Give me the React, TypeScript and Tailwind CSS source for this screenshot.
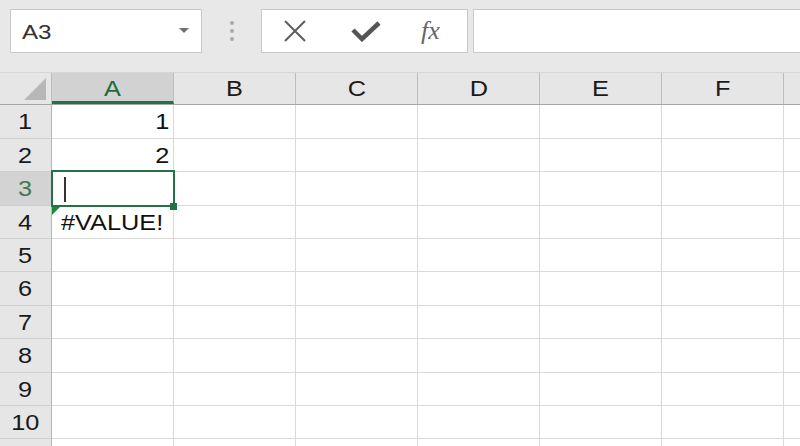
import React from "react";

const cols = ["A", "B", "C", "D", "E", "F", ""];
const rowHeights = [34, 33, 34, 33, 33, 34, 33, 34, 33, 33, 20];

export default function App() {
  return (
    <div
      className="w-[800px] h-[446px] overflow-hidden bg-white"
      style={{ fontFamily: '"Liberation Sans", Arial, sans-serif' }}
    >
      {/* toolbar */}
      <div className="h-[72px] bg-[#e8e8e8] flex items-start pt-[9px] pl-[10px]">
        <div className="w-[192px] h-[44px] bg-white border border-[#c9c9c9] flex items-center justify-between pl-[11px] pr-[12px]">
          <span className="text-[21px] text-[#333] inline-block origin-left scale-x-115 pt-[2px]">A3</span>
          <svg width="10" height="6" viewBox="0 0 10 6">
            <path d="M0 0 L10 0 L5 5 Z" fill="#707070" />
          </svg>
        </div>
        <div className="w-[59px] h-[44px] flex flex-col items-center justify-center gap-[4px]">
          <div className="w-[4px] h-[4px] rounded-full bg-[#a9a9a9]" />
          <div className="w-[4px] h-[4px] rounded-full bg-[#a9a9a9]" />
          <div className="w-[4px] h-[4px] rounded-full bg-[#a9a9a9]" />
        </div>
        <div className="w-[207px] h-[44px] bg-white border border-[#c9c9c9] flex items-center pl-[21px]">
          <svg width="24" height="24" viewBox="0 0 24 24">
            <path d="M2 2 L22 22 M22 2 L2 22" stroke="#5e5e5e" strokeWidth="2" fill="none" />
          </svg>
          <svg width="30" height="22" viewBox="0 0 30 22" className="ml-[44px]">
            <path d="M2 10 L11 19 L28 3" stroke="#555" strokeWidth="4.5" fill="none" />
          </svg>
          <span
            className="ml-[40px] italic text-[26px] text-[#666] leading-none"
            style={{ fontFamily: '"Liberation Serif", "Times New Roman", serif' }}
          >
            fx
          </span>
        </div>
        <div className="ml-[5px] flex-1 h-[44px] bg-white border border-[#c9c9c9] border-r-0" />
      </div>

      {/* column headers */}
      <div className="flex h-[33px] bg-[#e6e6e6] border-t border-[#d6d6d6] border-b border-b-[#a6a6a6]">
        <div className="w-[52px] shrink-0 border-r border-[#bdbdbd] relative">
          <svg width="52" height="31" viewBox="0 0 52 31" className="absolute left-0 top-0">
            <path d="M24 27 L46 5 L46 27 Z" fill="#b7b7b7" />
          </svg>
        </div>
        {cols.map((c, i) => (
          <div
            key={i}
            className={
              "w-[122px] shrink-0 flex items-center justify-center border-r text-[22px] " +
              (i === 0
                ? "bg-[#d2d2d2] border-[#bdbdbd] text-[#1e6b3d] border-b-[3px] border-b-[#217346] pt-[3px]"
                : "border-[#bdbdbd] text-[#1a1a1a]")
            }
          >
            <span className="inline-block scale-x-115">{c}</span>
          </div>
        ))}
      </div>

      {/* rows */}
      {rowHeights.map((h, r) => {
        const n = r + 1;
        const sel = n === 3;
        return (
          <div key={r} className="flex" style={{ height: h }}>
            <div
              className={
                "w-[52px] shrink-0 border-r border-r-[#b5b5b5] border-b border-b-[#cfcfcf] flex items-center justify-center text-[22px] " +
                (sel ? "bg-[#d3d3d3] text-[#3d7a57]" : "bg-[#e6e6e6] text-[#1a1a1a]")
              }
            >
              {n <= 10 && <span className="inline-block scale-x-115">{n}</span>}
            </div>
            {cols.map((c, i) => (
              <div
                key={i}
                className="w-[122px] shrink-0 border-r border-b border-[#d9d9d9] relative flex items-center text-[22px] text-[#111]"
              >
                {i === 0 && (n === 1 || n === 2) && (
                  <span className="ml-auto mr-[4px] inline-block origin-right scale-x-115">{n}</span>
                )}
                {i === 0 && n === 4 && (
                  <>
                    <svg width="9" height="9" viewBox="0 0 9 9" className="absolute left-0 top-0">
                      <path d="M0 0 L9 0 L0 9 Z" fill="#1e8a3c" />
                    </svg>
                    <span className="ml-[9px] inline-block origin-left scale-x-115">#VALUE!</span>
                  </>
                )}
                {i === 0 && sel && (
                  <>
                    <div className="absolute left-[12px] top-[5px] w-[2px] h-[25px] bg-[#333]" />
                    <div className="absolute z-10 -left-[1px] -top-[2px] w-[124px] h-[37px] border-2 border-[#217346]" />
                    <div className="absolute z-20 left-[118px] top-[31px] w-[7px] h-[7px] bg-[#217346]" />
                  </>
                )}
              </div>
            ))}
          </div>
        );
      })}
    </div>
  );
}
